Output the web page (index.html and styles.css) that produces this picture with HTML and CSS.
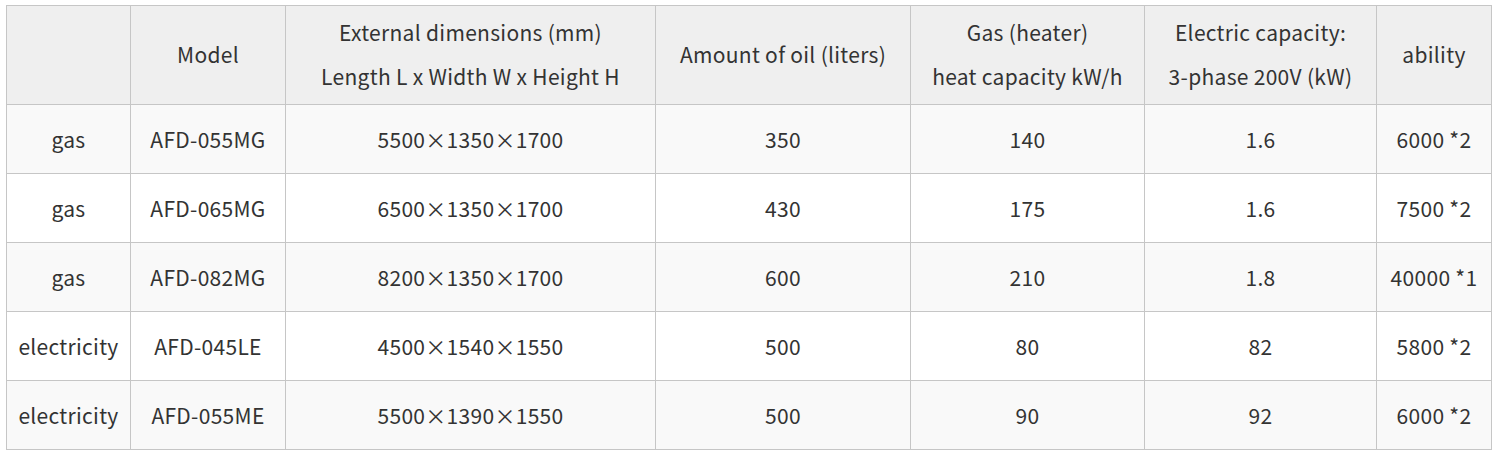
FILE: index.html
```html
<!DOCTYPE html>
<html lang="en">
<head>
    <meta charset="UTF-8">
    <meta name="viewport" content="width=device-width, initial-scale=1.0">
    <title>Fryer specifications</title>
    <link rel="stylesheet" href="styles.css">
</head>
<body>
    <table class="spec">
        <colgroup>
            <col class="c-type">
            <col class="c-model">
            <col class="c-dim">
            <col class="c-oil">
            <col class="c-gas">
            <col class="c-elec">
            <col class="c-ability">
        </colgroup>
        <thead>
            <tr>
                <th></th>
                <th>Model</th>
                <th>External dimensions (mm)<br>Length L x Width W x Height H</th>
                <th>Amount of oil (liters)</th>
                <th>Gas (heater)<br>heat capacity kW/h</th>
                <th>Electric capacity:<br>3-phase 200V (kW)</th>
                <th>ability</th>
            </tr>
        </thead>
        <tbody>
            <tr>
                <td>gas</td>
                <td>AFD-055MG</td>
                <td>5500×1350×1700</td>
                <td>350</td>
                <td>140</td>
                <td>1.6</td>
                <td>6000 *2</td>
            </tr>
            <tr>
                <td>gas</td>
                <td>AFD-065MG</td>
                <td>6500×1350×1700</td>
                <td>430</td>
                <td>175</td>
                <td>1.6</td>
                <td>7500 *2</td>
            </tr>
            <tr>
                <td>gas</td>
                <td>AFD-082MG</td>
                <td>8200×1350×1700</td>
                <td>600</td>
                <td>210</td>
                <td>1.8</td>
                <td>40000 *1</td>
            </tr>
            <tr>
                <td>electricity</td>
                <td>AFD-045LE</td>
                <td>4500×1540×1550</td>
                <td>500</td>
                <td>80</td>
                <td>82</td>
                <td>5800 *2</td>
            </tr>
            <tr>
                <td>electricity</td>
                <td>AFD-055ME</td>
                <td>5500×1390×1550</td>
                <td>500</td>
                <td>90</td>
                <td>92</td>
                <td>6000 *2</td>
            </tr>
        </tbody>
    </table>
</body>
</html>
```

FILE: styles.css
```css
* {
    box-sizing: border-box;
}
body {
    margin: 5px 6px;
    background-color: #fff;
    font-family: "Noto Sans CJK JP", "Noto Sans", sans-serif;
    color: #333;
}
.spec {
    width: 1485px;
    border-collapse: collapse;
    table-layout: fixed;
    font-size: 21px;
    letter-spacing: 0.3px;
}
.c-type { width: 124px; }
.c-model { width: 155px; }
.c-dim { width: 370px; }
.c-oil { width: 255px; }
.c-gas { width: 234px; }
.c-elec { width: 232px; }
.c-ability { width: 115px; }
.spec th,
.spec td {
    border: 1px solid #c6c6c6;
    text-align: center;
    vertical-align: middle;
    padding: 0;
    font-weight: normal;
    white-space: nowrap;
}
.spec th {
    background-color: #efefef;
    height: 99px;
    line-height: 44px;
    padding-bottom: 3px;
}
.spec td {
    height: 69px;
}
.spec tbody tr:nth-child(odd) td {
    background-color: #f9f9f9;
}
```
